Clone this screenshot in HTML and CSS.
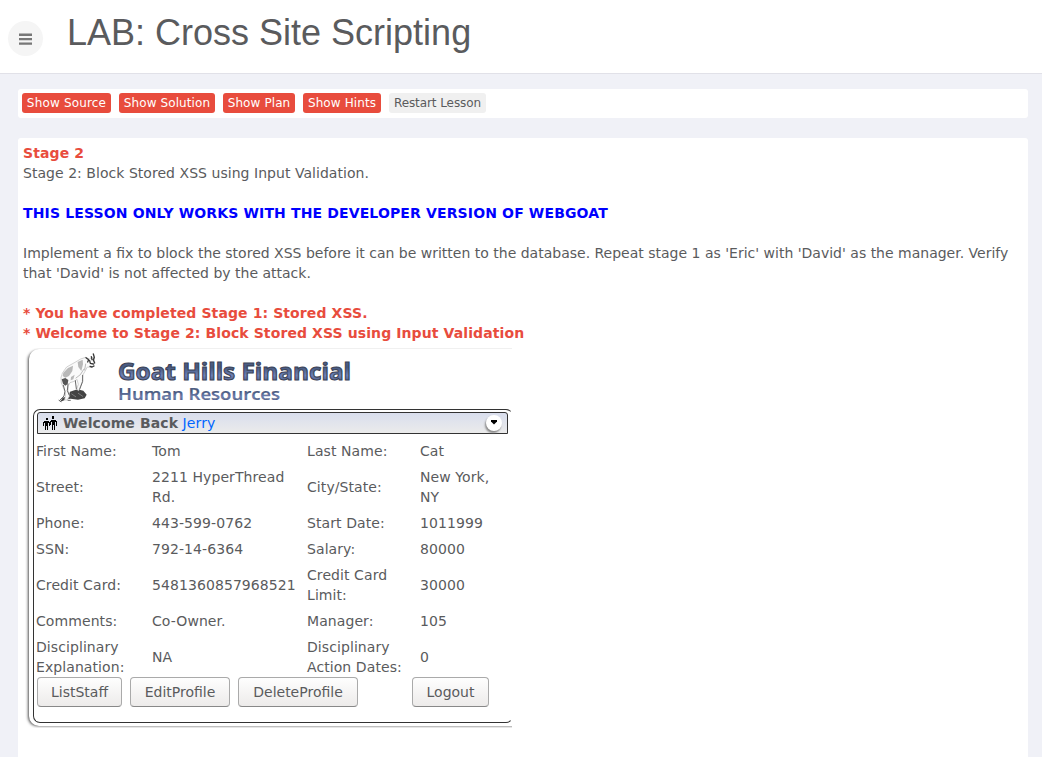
FILE: index.html
```html
<!DOCTYPE html>
<html lang="en">
<head>
<meta charset="utf-8">
<title>LAB: Cross Site Scripting</title>
<link rel="stylesheet" href="styles.css">
</head>
<body>
<header class="header">
  <button class="menu" aria-label="Menu"><svg width="13" height="12" viewBox="0 0 13 12"><path d="M0 .6h13v2.3H0zM0 5h13v2.3H0zM0 9.4h13v2.3H0z"/></svg></button>
  <h1>LAB: Cross Site Scripting</h1>
</header>
<main>
  <nav class="toolbar">
    <button class="tool source">Show Source</button>
    <button class="tool solution">Show Solution</button>
    <button class="tool plan">Show Plan</button>
    <button class="tool hints">Show Hints</button>
    <button class="tool plain">Restart Lesson</button>
  </nav>
  <section class="lesson">
    <div class="red">Stage 2</div>
    <div class="intro">Stage 2: Block Stored XSS using Input Validation.</div>
    <p class="notice">THIS LESSON ONLY WORKS WITH THE DEVELOPER VERSION OF WEBGOAT</p>
    <p>Implement a fix to block the stored XSS before it can be written to the database. Repeat stage 1 as 'Eric' with 'David' as the manager. Verify that 'David' is not affected by the attack.</p>
    <div class="red">* You have completed Stage 1: Stored XSS.</div>
    <div class="red">* Welcome to Stage 2: Block Stored XSS using Input Validation</div>
    <div class="clip">
      <div class="card">
        <svg class="brand" width="340" height="60" viewBox="0 0 340 60">
          <defs>
            <linearGradient id="ink" x1="0" y1="0" x2="0" y2="1">
              <stop offset="0" stop-color="#5f6f94"/><stop offset=".4" stop-color="#46587f"/><stop offset=".65" stop-color="#6d80b6"/><stop offset="1" stop-color="#39435f"/>
            </linearGradient>
          </defs>
          <g transform="translate(25 1) scale(.3333)" stroke-linejoin="round" stroke-linecap="round">
            <path d="M30 156L38 143 56 137 60 125 82 118 100 122 110 134 104 145 84 149 62 146 50 148Z" fill="#434343"/>
            <path d="M38 68L50 51 75 37 92 27 107 22 118 27 132 21 134 37 129 51 119 52 112 51 105 64 98 76 97 96 92 108 86 122 80 118 85 103 81 88 73 94 60 98 55 108 54 123 59 137 52 150 44 150 47 132 40 113 34 99 33 84Z" fill="#fafafa" stroke="#bbb" stroke-width="2"/>
            <path d="M40 68L54 54 69 47 67 63 57 78 46 83 38 78ZM83 36L98 29 99 43 94 63 85 51ZM63 81L74 74 70 88 62 91Z" fill="#b8b8b8"/>
            <path d="M35 88L46 84 55 90 53 102 46 107 39 101Z" fill="#555"/>
            <path d="M108 23L116 29 113 36M119 32L121 40 130 42M120 49L126 51 132 48M130 12L133 22 130 30 134 39M124 20L126 29" fill="none" stroke="#383838" stroke-width="4"/>
            <path d="M98 76L98 94 89 118M76 92L79 116M40 106L45 124 42 138 29 151M54 102L52 122 58 136M27 151L33 155M54 151L61 151" fill="none" stroke="#666" stroke-width="3"/>
            <path d="M107 42L104 60M102 57L91 74 78 84M65 132L77 140M85 130L98 139" fill="none" stroke="#999" stroke-width="2"/>
          </g>
          <text class="brand-name" x="93" y="31" textLength="233" lengthAdjust="spacingAndGlyphs">Goat Hills Financial</text>
          <text class="brand-sub" x="93" y="51" textLength="162" lengthAdjust="spacingAndGlyphs">Human Resources</text>
        </svg>
        <div class="panel">
          <div class="welcome">
            <svg width="14" height="14" viewBox="0 0 14 14" shape-rendering="crispEdges"><path d="M3 2h2v2H3zM9 0h2v3H9zM1 5h5v1h1v4H6V7H5v7H4v-4H3v4H2V7H1v3H0V6h1zM8 4h5v1h1v5h-1V6h-1v8h-1v-5h-1v5H9V6H8v3H7V5h1z"/></svg>
            <span><b>Welcome Back</b> <a>Jerry</a></span>
            <i class="drop"><svg width="8" height="5" viewBox="0 0 8 5"><path d="M1 0h6v1.5L4 4.5 1 1.5z"/></svg></i>
          </div>
          <div class="profile">
            <span>First Name:</span><span>Tom</span><span>Last Name:</span><span>Cat</span>
            <span>Street:</span><span>2211 HyperThread<br>Rd.</span><span>City/State:</span><span>New York,<br>NY</span>
            <span>Phone:</span><span>443-599-0762</span><span>Start Date:</span><span>1011999</span>
            <span>SSN:</span><span>792-14-6364</span><span>Salary:</span><span>80000</span>
            <span>Credit Card:</span><span>5481360857968521</span><span>Credit Card<br>Limit:</span><span>30000</span>
            <span>Comments:</span><span>Co-Owner.</span><span>Manager:</span><span>105</span>
            <span>Disciplinary<br>Explanation:</span><span>NA</span><span>Disciplinary<br>Action Dates:</span><span>0</span>
          </div>
          <div class="actions">
            <button class="w85">ListStaff</button><button class="w100">EditProfile</button><button class="w120">DeleteProfile</button><button class="logout">Logout</button>
          </div>
        </div>
      </div>
    </div>
  </section>
</main>
</body>
</html>
```
FILE: styles.css
```css
* { box-sizing: border-box; }
body {
  margin: 0;
  height: 757px;
  overflow: hidden;
  display: flex;
  flex-direction: column;
  background: #f0f1f7;
  color: #5a5b5d;
  font: 14px/20px "DejaVu Sans", sans-serif;
}
button { font-family: inherit; color: inherit; border: 0; padding: 0; white-space: nowrap; }
.header {
  flex: none;
  display: flex;
  height: 74px;
  padding-left: 8px;
  background: #fff;
  border-bottom: 1px solid #e1e1e8;
}
.menu {
  display: flex;
  align-items: center;
  justify-content: center;
  width: 35px;
  height: 35px;
  margin-top: 21px;
  border-radius: 50%;
  background: #f5f5f5;
}
.menu svg { fill: #777; }
h1 {
  margin: 13px 0 0 24px;
  font: 36px/40px "Liberation Sans", sans-serif;
}
main {
  flex: 1;
  display: flex;
  flex-direction: column;
  gap: 20px;
  padding: 15px 14px 0 18px;
}
.toolbar {
  flex: none;
  display: flex;
  gap: 8px;
  height: 29px;
  padding: 4px;
  background: #fff;
  border-radius: 3px;
}
.tool {
  height: 20px;
  border-radius: 3px;
  background: #e84c3d;
  color: #fff;
  font-size: 12px;
  line-height: 18px;
  letter-spacing: .1px;
}
.source { width: 89px; letter-spacing: .17px; }
.solution { width: 96px; }
.plan { width: 72px; }
.hints { width: 78px; }
.tool.plain { width: 97px; background: #f0f0f0; color: #5a5b5d; letter-spacing: -.08px; }
.lesson {
  flex: 1;
  padding: 5px;
  background: #fff;
  border-radius: 3px 3px 0 0;
}
.lesson p { margin: 20px 0; }
.intro { letter-spacing: .04px; }
.red { color: #e84c3d; font-weight: bold; letter-spacing: .1px; }
.lesson .notice { color: #00f; font-weight: bold; letter-spacing: .14px; }
.clip {
  width: 489px;
  height: 380px;
  margin-top: 5px;
  padding: 2px 0 0 6px;
  overflow: hidden;
}
.card {
  width: 500px;
  height: 377px;
  border-radius: 10px;
  background: #fff;
  box-shadow: -2px 1px 3px -1px #555, 0 0 2px #ddd;
}
.brand { display: block; margin: -1px 0 0 -4px; }
.brand-name, .brand-sub { fill: url(#ink); stroke: #3b4357; }
.brand-name { font: bold 24px "Open Sans", sans-serif; stroke-width: 1.1px; }
.brand-sub { font: 600 17px "Open Sans", sans-serif; stroke-width: .2px; }
.panel {
  width: 480px;
  height: 314px;
  margin-left: 4px;
  padding: 2px 2px 0;
  border: 1px solid #333;
  border-right-color: transparent;
  border-radius: 7px;
}
.welcome {
  display: flex;
  align-items: center;
  width: 471px;
  height: 22px;
  margin-left: 1px;
  padding: 0 5px;
  gap: 6px;
  border: 1px solid #333;
  border-radius: 3px 3px 0 0;
  background: linear-gradient(#d9deed, #ebebeb);
}
.welcome b { letter-spacing: .1px; }
.welcome a { color: #06f; letter-spacing: .15px; }
.drop {
  display: flex;
  align-items: center;
  justify-content: center;
  width: 16px;
  height: 16px;
  margin: -1px 0 0 auto;
  border-radius: 50%;
  background: #fff;
  box-shadow: -1px 2px 2px #888;
}
.profile {
  display: grid;
  grid-template-columns: 116px 155px 113px 90px;
  align-items: center;
  padding-top: 4px;
  letter-spacing: .08px;
}
.profile span { padding: 3px 0; white-space: nowrap; }
.actions { display: flex; gap: 8px; margin: -3px 0 0 1px; }
.actions button {
  height: 30px;
  border: 1px solid #aaa;
  border-bottom-color: #888;
  border-radius: 4px;
  background: linear-gradient(#fefefe, #edebea);
  font-size: 14px;
}
.w85 { width: 85px; }
.w100 { width: 100px; }
.w120 { width: 120px; }
.logout { width: 77px; margin-left: 46px; }
```
